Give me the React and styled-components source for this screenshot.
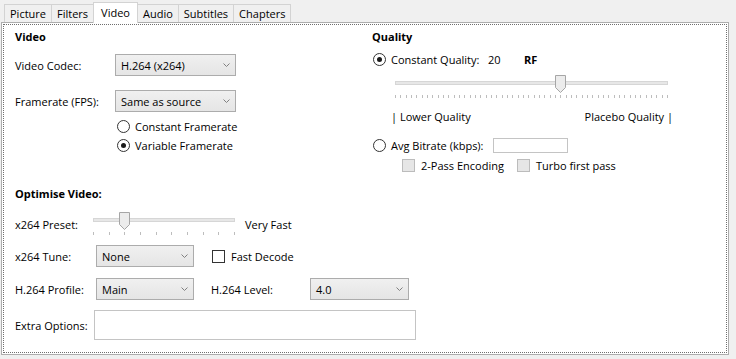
import React from "react";
import styled, { createGlobalStyle } from "styled-components";

const GlobalStyle = createGlobalStyle`
  html, body {
    margin: 0;
    padding: 0;
    background: #f0f0f0;
  }
  body {
    font-family: "Segoe UI", "Open Sans", "Noto Sans", sans-serif;
    font-size: 11px;
    color: #000;
  }
`;

const Window = styled.div`
  width: 736px;
  height: 359px;
  box-sizing: border-box;
  padding: 2px 7px 0 1px;
  background: #f0f0f0;
  overflow: hidden;
`;

const TabBar = styled.div`
  display: flex;
  align-items: flex-end;
  height: 20px;
  padding-left: 4px;
`;

const Tab = styled.div`
  position: relative;
  box-sizing: border-box;
  height: ${({ active }) => (active ? "21px" : "18px")};
  margin-bottom: ${({ active }) => (active ? "-1px" : "0")};
  margin-left: -1px;
  padding: 0 ${({ active }) => (active ? "7px" : "5px")};
  display: flex;
  align-items: center;
  padding-bottom: ${({ active }) => (active ? "2px" : "0")};
  border: 1px solid #d3d3d3;
  border-bottom: none;
  background: ${({ active }) => (active ? "#fff" : "#f0f0f0")};
  z-index: ${({ active }) => (active ? 2 : 1)};
  line-height: 15px;
  white-space: nowrap;
`;

const Panel = styled.div`
  position: relative;
  z-index: 1;
  box-sizing: border-box;
  height: 333px;
  padding: 1px;
  background: #fff;
  border: 1px solid #adadad;
`;

const Focus = styled.div`
  box-sizing: border-box;
  height: 100%;
  border: 1px dotted #6e6e6e;
  padding: 4px 0 0 11px;
`;

const TopGrid = styled.div`
  display: grid;
  grid-template-columns: 357px 1fr;
  height: 144px;
`;

const Column = styled.div`
  display: flex;
  flex-direction: column;
`;

const Title = styled.div`
  font-weight: bold;
  height: 15px;
  line-height: 15px;
  margin-top: ${({ mt }) => mt || 0}px;
`;

const Row = styled.div`
  display: flex;
  align-items: center;
  height: ${({ h }) => h}px;
  margin-top: ${({ mt }) => mt || 0}px;
  margin-left: ${({ ml }) => ml || 0}px;
  width: ${({ w }) => (w ? `${w}px` : "auto")};
  justify-content: ${({ spread }) => (spread ? "space-between" : "flex-start")};
  white-space: nowrap;
`;

const Label = styled.span`
  width: ${({ w }) => w}px;
  flex: none;
  margin-left: ${({ ml }) => ml || 0}px;
  font-weight: ${({ bold }) => (bold ? "bold" : "normal")};
`;

const SelectBox = styled.div`
  box-sizing: border-box;
  width: ${({ w }) => w}px;
  height: 22px;
  display: flex;
  align-items: center;
  justify-content: space-between;
  padding: 0 5px 0 5px;
  border: 1px solid #acacac;
  background: linear-gradient(#f0f0f0, #e5e5e5);
  flex: none;
`;

const TextInput = styled.div`
  box-sizing: border-box;
  width: ${({ w }) => w}px;
  height: ${({ h }) => h}px;
  border: 1px solid #c4c4c4;
  background: #fff;
  flex: none;
`;

const RadioCircle = styled.span`
  box-sizing: border-box;
  width: 13px;
  height: 13px;
  border-radius: 50%;
  border: 1px solid #333;
  background: #fff;
  display: inline-flex;
  align-items: center;
  justify-content: center;
  margin-right: 5px;
  flex: none;

  &::after {
    content: "";
    width: 5px;
    height: 5px;
    border-radius: 50%;
    background: #1a1a1a;
    display: ${({ checked }) => (checked ? "block" : "none")};
  }
`;

const CheckBox = styled.span`
  box-sizing: border-box;
  width: 13px;
  height: 13px;
  border: 1px solid ${({ disabled }) => (disabled ? "#bcbcbc" : "#333")};
  background: ${({ disabled }) => (disabled ? "#e6e6e6" : "#fff")};
  margin-right: 6px;
  flex: none;
`;

const CheckItem = styled.span`
  display: flex;
  align-items: center;
  width: ${({ w }) => (w ? `${w}px` : "auto")};
  margin-left: ${({ ml }) => ml || 0}px;
  flex: none;
`;

const SliderBox = styled.div`
  position: relative;
  width: ${({ w }) => w}px;
  height: 24px;
  margin-top: ${({ mt }) => mt || 0}px;
  margin-left: ${({ ml }) => ml || 0}px;
  flex: none;
`;

const Track = styled.div`
  position: absolute;
  left: 0;
  right: 0;
  top: 6px;
  height: 4px;
  box-sizing: border-box;
  background: #e7e7e7;
  border: 1px solid #d6d6d6;
`;

const Tick = styled.div`
  position: absolute;
  top: 20px;
  width: 1px;
  height: 3px;
  background: #bdbdbd;
`;

const Thumb = styled.svg`
  position: absolute;
  top: 0;
`;

const Section = styled.div`
  display: flex;
  flex-direction: column;
`;

function Chevron() {
  return (
    <svg width="7" height="4" viewBox="0 0 7 4">
      <path d="M0.5 0.5 L3.5 3.5 L6.5 0.5" fill="none" stroke="#808080" strokeWidth="1" />
    </svg>
  );
}

function Select({ w, value }) {
  return (
    <SelectBox w={w}>
      <span>{value}</span>
      <Chevron />
    </SelectBox>
  );
}

function Slider({ w, ticks, pos, ml, mt }) {
  const marks = [];
  for (let i = 0; i < ticks; i++) {
    marks.push(<Tick key={i} style={{ left: Math.round((i * (w - 1)) / (ticks - 1)) }} />);
  }
  const cx = Math.round(pos * (w - 1));
  return (
    <SliderBox w={w} ml={ml} mt={mt}>
      <Track />
      {marks}
      <Thumb width="11" height="18" viewBox="0 0 11 18" style={{ left: cx - 5 }}>
        <path d="M0.5 0.5 H10.5 V12.5 L5.5 17.5 L0.5 12.5 Z" fill="#ececec" stroke="#a6a6a6" />
      </Thumb>
    </SliderBox>
  );
}

export default function App() {
  const tabs = ["Picture", "Filters", "Video", "Audio", "Subtitles", "Chapters"];
  return (
    <>
      <GlobalStyle />
      <Window>
        <TabBar>
          {tabs.map((t) => (
            <Tab key={t} active={t === "Video"}>
              {t}
            </Tab>
          ))}
        </TabBar>
        <Panel>
          <Focus>
            <TopGrid>
              <Column>
                <Title>Video</Title>
                <Row h={22} mt={10}>
                  <Label w={100}>Video Codec:</Label>
                  <Select w={121} value="H.264 (x264)" />
                </Row>
                <Row h={22} mt={14}>
                  <Label w={100}>Framerate (FPS):</Label>
                  <Select w={121} value="Same as source" />
                </Row>
                <Row h={19} mt={5} ml={102}>
                  <RadioCircle />
                  Constant Framerate
                </Row>
                <Row h={19} ml={102}>
                  <RadioCircle checked />
                  Variable Framerate
                </Row>
              </Column>
              <Column>
                <Title>Quality</Title>
                <Row h={18} mt={6} ml={1}>
                  <RadioCircle checked />
                  <Label w={97}>Constant Quality:</Label>
                  <Label w={36}>20</Label>
                  <Label bold>RF</Label>
                </Row>
                <Slider w={273} ticks={52} pos={31 / 51} ml={23} mt={7} />
                <Row h={15} mt={10} ml={19} w={282} spread>
                  <span>| Lower Quality</span>
                  <span>Placebo Quality |</span>
                </Row>
                <Row h={17} mt={13} ml={1}>
                  <RadioCircle />
                  <Label w={102}>Avg Bitrate (kbps):</Label>
                  <TextInput w={75} h={15} />
                </Row>
                <Row h={15} mt={4} ml={30}>
                  <CheckItem w={115}>
                    <CheckBox disabled />
                    2-Pass Encoding
                  </CheckItem>
                  <CheckItem>
                    <CheckBox disabled />
                    Turbo first pass
                  </CheckItem>
                </Row>
              </Column>
            </TopGrid>
            <Section>
              <Title mt={13}>Optimise Video:</Title>
              <Row h={24} mt={11}>
                <Label w={78}>x264 Preset:</Label>
                <Slider w={142} ticks={10} pos={2 / 9} />
                <Label w={80} ml={10}>Very Fast</Label>
              </Row>
              <Row h={22} mt={9}>
                <Label w={81}>x264 Tune:</Label>
                <Select w={98} value="None" />
                <CheckItem ml={18}>
                  <CheckBox />
                  Fast Decode
                </CheckItem>
              </Row>
              <Row h={22} mt={11}>
                <Label w={81}>H.264 Profile:</Label>
                <Select w={98} value="Main" />
                <Label w={99} ml={17}>H.264 Level:</Label>
                <Select w={99} value="4.0" />
              </Row>
              <Row h={30} mt={10}>
                <Label w={79}>Extra Options:</Label>
                <TextInput w={322} h={30} />
              </Row>
            </Section>
          </Focus>
        </Panel>
      </Window>
    </>
  );
}
